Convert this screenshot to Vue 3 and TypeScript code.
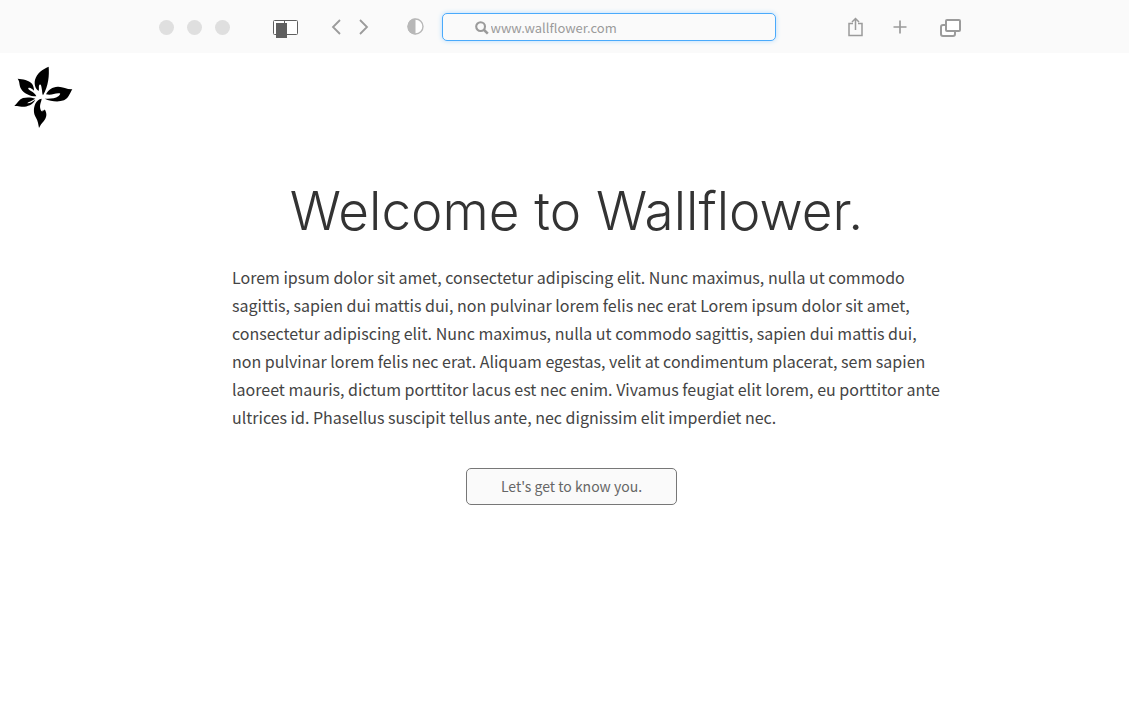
<script setup lang="ts">
import { ref } from 'vue'

const address = ref<string>('www.wallflower.com')
const windowDots: string[] = ['Close', 'Minimize', 'Zoom']
</script>

<template>
  <div class="page">
    <header class="toolbar">
      <div class="dots">
        <button v-for="dot in windowDots" :key="dot" class="dot" type="button" :aria-label="dot"></button>
      </div>
      <button class="tool sidebar" type="button" aria-label="Toggle sidebar">
        <svg width="25" height="19" viewBox="0 0 25 19">
          <rect x=".5" y=".5" width="24" height="14" rx="1" fill="#fff" stroke="#5f5f5f" />
          <path d="M11.5 0V4" stroke="#5f5f5f" />
          <path d="M3 3H14V18H3Z" fill="#5f5f5f" />
        </svg>
      </button>
      <nav class="history">
        <button class="tool" type="button" aria-label="Back">
          <svg width="10" height="16" viewBox="0 0 10 16"><path d="M9 1L2 8L9 15" fill="none" stroke="#9b9b9b" stroke-width="1.8" /></svg>
        </button>
        <button class="tool" type="button" aria-label="Forward">
          <svg width="10" height="16" viewBox="0 0 10 16"><path d="M1 1L8 8L1 15" fill="none" stroke="#9b9b9b" stroke-width="1.8" /></svg>
        </button>
      </nav>
      <button class="tool contrast" type="button" aria-label="Appearance">
        <svg width="17" height="17" viewBox="0 0 17 17">
          <circle cx="8.5" cy="8.5" r="7.5" fill="#fff" stroke="#b8b8b8" stroke-width="1.4" />
          <path d="M8.5 .5A8 8 0 0 0 8.5 16.5Z" fill="#b8b8b8" />
        </svg>
      </button>
      <label class="address">
        <svg width="14" height="14" viewBox="0 0 14 14">
          <circle cx="5.6" cy="5.6" r="4.4" fill="none" stroke="#9b9b9b" stroke-width="2.1" />
          <path d="M8.8 8.8L12.8 12.6" stroke="#9b9b9b" stroke-width="2.6" />
        </svg>
        <input v-model="address" type="text" aria-label="Address" />
      </label>
      <button class="tool share" type="button" aria-label="Share">
        <svg width="15" height="20" viewBox="0 0 15 20">
          <path d="M5 6.5H1V18.5H14V6.5H10M7.5 13V1.5M4 5L7.5 1.5L11 5" fill="none" stroke="#9b9b9b" stroke-width="1.5" />
        </svg>
      </button>
      <button class="tool plus" type="button" aria-label="New tab">
        <svg width="14" height="14" viewBox="0 0 14 14"><path d="M7 .5V13.5M.5 7H13.5" stroke="#9b9b9b" stroke-width="1.7" /></svg>
      </button>
      <button class="tool tabs" type="button" aria-label="Show tabs">
        <svg width="21" height="18" viewBox="0 0 21 18">
          <rect x="1" y="6" width="14" height="11" rx="2" fill="#fff" stroke="#9b9b9b" stroke-width="2" />
          <rect x="6" y="1" width="14" height="11" rx="1" fill="#fff" stroke="#9b9b9b" stroke-width="2" />
        </svg>
      </button>
    </header>

    <a class="logo" href="#" aria-label="Wallflower">
      <svg width="60" height="64" viewBox="40 46 180 192">
        <path d="M147 51C149 76 147 108 130 137C127 133 128 124 126 116C125 108 123 102 119 106C116 110 119 116 117 124C107 117 103 104 106 91C111 71 129 58 147 51Z" />
        <path d="M54 87C69 88 87 91 97 102C101 107 103 115 103 123C97 118 92 113 86 115C84 120 93 122 99 127C104 131 108 134 110 140C91 140 72 131 64 117C58 107 61 96 54 87Z" />
        <path d="M44 169C52 162 57 150 70 145C82 142 96 143 107 147L96 153C90 156 85 157 83 161C92 162 98 155 107 150C99 166 81 172 66 171C57 170 51 168 44 169Z" />
        <path d="M218 119C210 132 207 145 193 152C175 158 153 155 135 147C151 147 166 148 176 140C183 134 184 130 176 131C163 132 154 138 139 134C146 120 158 112 174 111C189 110 202 120 218 119Z" />
        <path d="M126 147C125 157 119 165 122 177C124 185 130 189 129 181C132 184 135 182 135 179C144 193 140 206 132 215C125 222 122 228 118 235C116 223 115 214 109 204C101 191 101 176 107 162C111 154 117 148 126 147Z" />
      </svg>
    </a>

    <main class="welcome">
      <h1>Welcome to Wallflower.</h1>
      <p>
        Lorem ipsum dolor sit amet, consectetur adipiscing elit. Nunc maximus, nulla ut commodo
        sagittis, sapien dui mattis dui, non pulvinar lorem felis nec erat Lorem ipsum dolor sit amet,
        consectetur adipiscing elit. Nunc maximus, nulla ut commodo sagittis, sapien dui mattis dui,
        non pulvinar lorem felis nec erat. Aliquam egestas, velit at condimentum placerat, sem sapien
        laoreet mauris, dictum porttitor lacus est nec enim. Vivamus feugiat elit lorem, eu porttitor ante
        ultrices id. Phasellus suscipit tellus ante, nec dignissim elit imperdiet nec.
      </p>
      <button class="start" type="button">Let's get to know you.</button>
    </main>
  </div>
</template>

<style>
body {
  margin: 0;
  background: #fff;
}
</style>

<style scoped>
.page {
  font-family: "Noto Sans CJK SC", "Open Sans", sans-serif;
  color: #333;
}
.toolbar {
  display: flex;
  align-items: center;
  justify-content: center;
  box-sizing: border-box;
  height: 53px;
  padding-right: 10px;
  background: #fafafa;
}
.dots {
  display: flex;
  gap: 13px;
  padding-top: 2px;
}
.dot {
  width: 15px;
  height: 15px;
  padding: 0;
  border: 0;
  border-radius: 50%;
  background: #dfdfdf;
}
.tool {
  display: block;
  padding: 0;
  border: 0;
  background: none;
}
.tool svg {
  display: block;
}
.sidebar {
  margin: 6px 0 0 43px;
}
.history {
  display: flex;
  gap: 18px;
  margin-left: 33px;
}
.contrast {
  margin-left: 38px;
}
.address {
  display: flex;
  align-items: center;
  gap: 2px;
  box-sizing: border-box;
  flex: 0 1 334px;
  height: 28px;
  margin-left: 18px;
  padding: 2px 16px 0 32px;
  border: 1px solid #4aaafb;
  border-radius: 5px;
  background: #fafafa;
  box-shadow: 0 0 5px #b5dcff;
}
.address svg {
  flex: none;
}
.address input {
  flex: 1;
  min-width: 0;
  padding: 0;
  border: 0;
  outline: 0;
  background: none;
  color: #9b9b9b;
  font: 13px/20px "Noto Sans CJK SC", "Open Sans", sans-serif;
}
.share {
  margin-left: 72px;
}
.plus {
  margin-left: 30px;
}
.tabs {
  margin: 2px 0 0 33px;
}
.logo {
  display: block;
  width: 60px;
  margin: 12px 0 0 13px;
  color: #000;
}
.logo svg {
  display: block;
}
.welcome {
  display: flex;
  flex-direction: column;
  align-items: center;
  padding: 52px 24px 40px;
}
h1 {
  margin: 0;
  padding-left: 24px;
  font: 300 53px/60px "Inter", sans-serif;
}
p {
  max-width: 712px;
  margin: 22px 0 0;
  padding-left: 47px;
  color: #444;
  font-size: 16px;
  line-height: 28px;
}
.start {
  box-sizing: border-box;
  height: 37px;
  margin: 37px 0 0 14px;
  padding: 0 34px 2px;
  border: 1px solid #777;
  border-radius: 5px;
  background: #fafafa;
  color: #666;
  font: 14px/24px "Noto Sans CJK SC", "Open Sans", sans-serif;
}
</style>
